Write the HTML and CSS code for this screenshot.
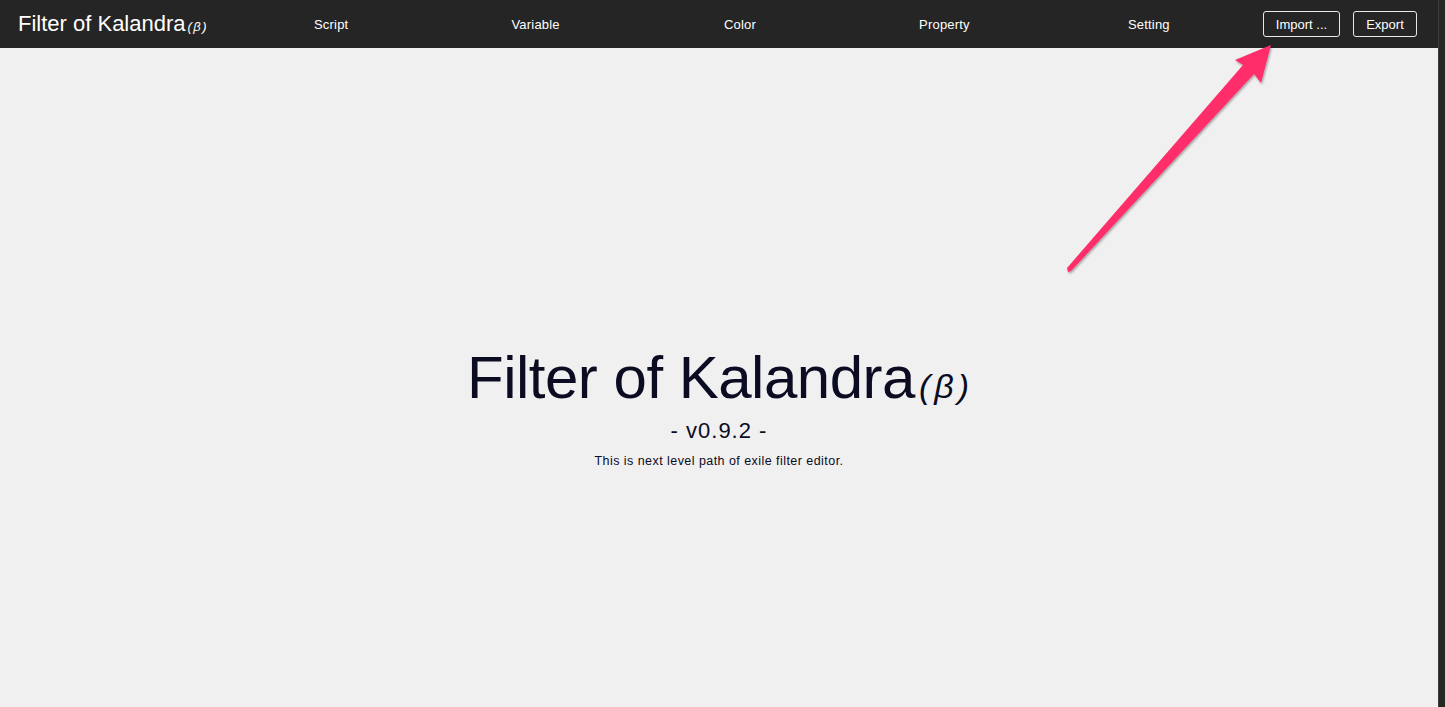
FILE: index.html
```html
<!DOCTYPE html>
<html lang="en">
<head>
<meta charset="utf-8">
<title>Filter of Kalandra</title>
<link rel="stylesheet" href="styles.css">
</head>
<body>
<div class="app">
  <header class="topbar">
    <div class="logo">Filter of Kalandra<span class="beta">(β)</span></div>
    <nav class="nav">
      <a class="nav-item">Script</a>
      <a class="nav-item">Variable</a>
      <a class="nav-item">Color</a>
      <a class="nav-item">Property</a>
      <a class="nav-item">Setting</a>
    </nav>
    <div class="actions">
      <button class="btn btn-import">Import ...</button>
      <button class="btn btn-export">Export</button>
    </div>
  </header>
  <main class="hero">
    <h1 class="hero-title">Filter of Kalandra<span class="beta">(β)</span></h1>
    <p class="hero-version">- v0.9.2 -</p>
    <p class="hero-desc">This is next level path of exile filter editor.</p>
  </main>
</div>
<div class="edge"></div>
<svg class="arrow" width="1445" height="707" viewBox="0 0 1445 707">
  <defs>
    <filter id="sh" x="-10%" y="-10%" width="130%" height="130%">
      <feDropShadow dx="1" dy="1.5" stdDeviation="1.2" flood-color="#000" flood-opacity="0.35"/>
    </filter>
  </defs>
  <polygon filter="url(#sh)" fill="#ff2d6a"
    points="1271,45 1235,60 1243,65 1067,268 1068,272 1071,271 1254,74 1261,83"/>
</svg>
</body>
</html>
```
FILE: styles.css
```css
* { box-sizing: border-box; }
html, body { margin: 0; padding: 0; height: 100%; }
body {
  display: flex;
  background: #f0f0f0;
  font-family: "Liberation Sans", Arial, sans-serif;
  overflow: hidden;
  position: relative;
}
.app {
  width: 1438px;
  flex: 0 0 1438px;
  display: flex;
  flex-direction: column;
  height: 707px;
}
.edge {
  flex: 1;
  background: #262823;
  border-left: 1px solid #3c3d39;
}
.topbar {
  height: 48px;
  flex: 0 0 48px;
  background: #252525;
  display: flex;
  align-items: center;
  padding: 0 21px 0 18px;
  color: #fff;
}
.logo {
  flex: 0 0 211px;
  font-size: 22px;
  white-space: nowrap;
}
.logo .beta {
  font-style: italic;
  font-size: 13px;
  margin-left: 2px;
  letter-spacing: 1.5px;
}
.nav {
  flex: 1;
  display: flex;
  margin-right: 12px;
}
.nav-item {
  flex: 1;
  text-align: center;
  font-size: 13px;
  letter-spacing: 0.2px;
  color: #fff;
  cursor: pointer;
}
.actions {
  display: flex;
  gap: 13px;
}
.btn {
  background: transparent;
  border: 1px solid #e8e8e8;
  border-radius: 3px;
  color: #fff;
  font-family: inherit;
  font-size: 13px;
  height: 26px;
  padding: 0;
  white-space: nowrap;
  cursor: pointer;
}
.btn-import { width: 77px; }
.btn-export { width: 64px; }
.hero {
  flex: 1;
  display: flex;
  flex-direction: column;
  align-items: center;
  padding-top: 295px;
  color: #0b0b22;
}
.hero-title {
  margin: 0;
  font-weight: 400;
  font-size: 60px;
  line-height: 70px;
  letter-spacing: -0.5px;
  padding-left: 2px;
}
.hero-title .beta {
  font-style: italic;
  font-size: 34px;
  letter-spacing: 4px;
  margin-left: 4px;
}
.hero-version {
  margin: -4px 0 0;
  font-size: 22px;
  line-height: 28px;
  letter-spacing: 1px;
}
.hero-desc {
  margin: 8px 0 0;
  font-size: 12.5px;
  line-height: 16px;
  letter-spacing: 0.45px;
}
.arrow {
  position: absolute;
  left: 0;
  top: 0;
  pointer-events: none;
}
```
